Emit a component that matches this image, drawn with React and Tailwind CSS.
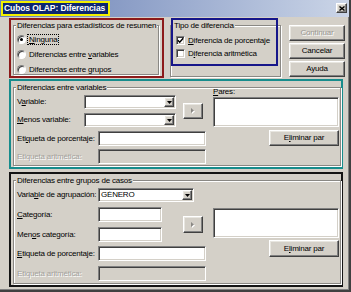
import React from "react";

const FIELD =
  "border border-t-[#808080] border-l-[#808080] border-b-white border-r-white shadow-[inset_1px_1px_0_#404040,inset_-1px_-1px_0_#d4d0c8]";
const RAISED =
  "border border-t-white border-l-white border-r-[#404040] border-b-[#404040] shadow-[inset_-1px_-1px_0_#808080,inset_1px_1px_0_#e8e6e0]";

function U({ children }) {
  return <span className="underline underline-offset-[1px]">{children}</span>;
}

function Radio({ checked }) {
  return (
    <span className="flex h-[9px] w-[9px] shrink-0 items-center justify-center rounded-full bg-white border border-t-[#808080] border-l-[#808080] border-b-white border-r-white shadow-[inset_1px_1px_0_#404040]">
      {checked && <span className="h-[3px] w-[3px] rounded-full bg-black" />}
    </span>
  );
}

function Check({ checked }) {
  return (
    <span className={"flex h-[9px] w-[9px] shrink-0 items-center justify-center bg-white " + FIELD}>
      {checked && (
        <svg width="7" height="7" viewBox="0 0 7 7">
          <path d="M0.8 3.3 L2.7 5.2 L6.2 1.3" stroke="#000" strokeWidth="1.5" fill="none" />
        </svg>
      )}
    </span>
  );
}

function Group({ legend, className, children }) {
  return (
    <div className={"relative border border-[#8a8884] shadow-[inset_1px_1px_0_#fff,1px_1px_0_#fff] " + className}>
      <span className="absolute left-[2px] top-[-5px] bg-[#d4d0c8] px-[1px] leading-[9px] whitespace-nowrap">
        {legend}
      </span>
      {children}
    </div>
  );
}

function Combo({ className, children }) {
  return (
    <div className={"flex items-center bg-white " + FIELD + " " + className}>
      <span className="flex-1 pl-[2px] leading-none truncate">{children}</span>
      <span className={"mr-[1px] flex h-[10px] w-[10px] items-center justify-center bg-[#d4d0c8] " + RAISED}>
        <svg width="5" height="3" viewBox="0 0 5 3">
          <path d="M0 0H5L2.5 3Z" fill="#000" />
        </svg>
      </span>
    </div>
  );
}

function Field({ className, disabled }) {
  return <div className={(disabled ? "bg-[#d4d0c8] " : "bg-white ") + FIELD + " " + className} />;
}

function ArrowBtn({ className }) {
  return (
    <div className={"flex h-[16px] w-[20px] items-center justify-center bg-[#d4d0c8] " + RAISED + " " + className}>
      <svg width="4" height="6" viewBox="0 0 4 6">
        <path d="M1 1L4 3.5L1 6Z" fill="#fff" />
        <path d="M0 0L3 2.5L0 5Z" fill="#8a8884" />
      </svg>
    </div>
  );
}

function Btn({ className, disabled, children }) {
  return (
    <div
      className={
        "flex items-center justify-center bg-[#d4d0c8] leading-none whitespace-nowrap " +
        RAISED +
        " " +
        (disabled ? "text-[#9a9893] [text-shadow:1px_1px_0_#fff] " : "") +
        className
      }
    >
      {children}
    </div>
  );
}

function Dis({ children }) {
  return <span className="text-[#a3a19c] [text-shadow:1px_1px_0_#fff]">{children}</span>;
}

export default function App() {
  return (
    <div className="relative flex h-[292px] w-[351px] flex-col overflow-hidden bg-[#d4d0c8] font-['Liberation_Sans',Arial,sans-serif] text-[8px] tracking-[-0.2px] text-black border-r-2 border-b-2 border-r-[#404040] border-b-[#404040] shadow-[inset_-1px_-1px_0_#808080]">
      {/* title bar */}
      <div className="flex h-[17px] shrink-0 items-start bg-linear-to-r from-[#6a80b4] to-[#cbd5e7]">
        <div className="ml-[1px] mt-[1px] flex h-[15px] w-[109px] items-center overflow-hidden whitespace-nowrap border-2 border-[#f2f000] bg-[#0c2670] pl-[1px] text-[8.5px] font-bold tracking-[-0.1px] text-white">
          Cubos OLAP: Diferencias
        </div>
        <div className={"ml-auto mr-[2px] mt-[3px] flex h-[10px] w-[11px] items-center justify-center bg-[#d4d0c8] " + RAISED}>
          <svg width="6" height="5" viewBox="0 0 6 5">
            <path d="M0.5 0.5L5.5 4.5M5.5 0.5L0.5 4.5" stroke="#000" strokeWidth="1.4" />
          </svg>
        </div>
      </div>

      <div className="flex flex-col pl-[9px]">
        {/* top row */}
        <div className="mt-[1px] flex items-start">
          <div className="h-[60px] w-[155px] border-2 border-[#8c1a1a] pl-[2px] pt-[5px]">
            <Group legend="Diferencias para estadísticos de resumen" className="h-[50px] w-[146px]">
              <div className="flex flex-col gap-[6px] pl-[3px] pt-[9px]">
                <div className="flex h-[9px] items-center">
                  <Radio checked />
                  <span className="ml-[2px] px-[1px] leading-[9px] outline outline-1 outline-dotted outline-black">
                    <U>N</U>inguna
                  </span>
                </div>
                <div className="flex h-[9px] items-center">
                  <Radio />
                  <span className="ml-[3px] leading-none">
                    Diferencias entre <U>v</U>ariables
                  </span>
                </div>
                <div className="flex h-[9px] items-center">
                  <Radio />
                  <span className="ml-[3px] leading-none">
                    Diferencias entre <U>g</U>rupos
                  </span>
                </div>
              </div>
            </Group>
          </div>

          <div className="relative ml-[6px] h-[60px] w-[111px]">
            <Group legend="Tipo de diferencia" className="mt-[7px] h-[52px] w-full">
              <div className="flex flex-col gap-[4px] pl-[5px] pt-[10px]">
                <div className="flex h-[9px] items-center">
                  <Check checked />
                  <span className="ml-[3px] leading-none">
                    <U>D</U>iferencia de porcentaje
                  </span>
                </div>
                <div className="flex h-[9px] items-center">
                  <Check />
                  <span className="ml-[3px] leading-none">
                    D<U>i</U>ferencia aritmética
                  </span>
                </div>
              </div>
            </Group>
            <div className="pointer-events-none absolute left-[1px] top-0 h-[48px] w-[107px] border-2 border-[#16168a]" />
          </div>

          <div className="ml-[8px] mt-[7px] flex w-[56px] flex-col gap-[2px]">
            <Btn disabled className="h-[16px]">Continuar</Btn>
            <Btn className="h-[16px]">Cancelar</Btn>
            <Btn className="h-[16px]">Ayuda</Btn>
          </div>
        </div>

        {/* teal: variables */}
        <div className="mt-[1px] h-[90px] w-[334px] border-2 border-[#178c8c] pl-[2px] pt-[6px]">
          <Group legend="Diferencias entre variables" className="h-[79px] w-[328px]">
            <div className="flex pl-[3px]">
              <div className="flex w-[189px] flex-col pt-[7px]">
                <div className="flex items-center">
                  <div className="flex w-[159px] flex-col gap-[4px]">
                    <div className="flex h-[14px] items-center">
                      <span className="w-[67px] leading-none">
                        V<U>a</U>riable:
                      </span>
                      <Combo className="h-[14px] w-[92px]" />
                    </div>
                    <div className="flex h-[14px] items-center">
                      <span className="w-[67px] leading-none">
                        <U>M</U>enos variable:
                      </span>
                      <Combo className="h-[14px] w-[92px]" />
                    </div>
                  </div>
                  <ArrowBtn className="ml-[7px]" />
                </div>
                <div className="mt-[4px] flex h-[15px] items-center">
                  <span className="w-[81px] leading-none">
                    Eti<U>q</U>ueta de porcentaje:
                  </span>
                  <Field className="h-[15px] w-[108px]" />
                </div>
                <div className="mt-[3px] flex h-[15px] items-center">
                  <span className="w-[81px] leading-none">
                    <Dis>Etiqueta aritmética:</Dis>
                  </span>
                  <Field disabled className="h-[15px] w-[108px]" />
                </div>
              </div>
              <div className="ml-[7px] flex w-[126px] flex-col">
                <span className="leading-[8px]">
                  <U>P</U>ares:
                </span>
                <Field className="mt-[1px] h-[30px] w-full" />
                <Btn className="mt-[3px] h-[16px] w-[70px] self-end">
                  E<U>l</U>iminar par
                </Btn>
              </div>
            </div>
          </Group>
        </div>

        {/* black: groups */}
        <div className="mt-[3px] h-[115px] w-[334px] border-2 border-[#141414] pl-[2px] pt-[6px]">
          <Group legend="Diferencias entre grupos de casos" className="h-[104px] w-[328px]">
            <div className="flex pl-[3px]">
              <div className="flex w-[189px] flex-col pt-[7px]">
                <div className="flex h-[14px] items-center">
                  <span className="w-[81px] leading-none">
                    Varia<U>b</U>le de agrupación:
                  </span>
                  <Combo className="h-[14px] w-[96px]">GÉNERO</Combo>
                </div>
                <div className="mt-[5px] flex items-center">
                  <div className="flex w-[145px] flex-col gap-[5px]">
                    <div className="flex h-[15px] items-center">
                      <span className="w-[81px] leading-none">
                        <U>C</U>ategoría:
                      </span>
                      <Field className="h-[15px] w-[64px]" />
                    </div>
                    <div className="flex h-[15px] items-center">
                      <span className="w-[81px] leading-none">
                        Men<U>o</U>s categoría:
                      </span>
                      <Field className="h-[15px] w-[64px]" />
                    </div>
                  </div>
                  <ArrowBtn className="ml-[21px] h-[17px]" />
                </div>
                <div className="mt-[4px] flex h-[15px] items-center">
                  <span className="w-[81px] leading-none">
                    <U>E</U>tiqueta de porcentaje:
                  </span>
                  <Field className="h-[15px] w-[108px]" />
                </div>
                <div className="mt-[5px] flex h-[15px] items-center">
                  <span className="w-[81px] leading-none">
                    <Dis>Etiqueta aritmética:</Dis>
                  </span>
                  <Field disabled className="h-[15px] w-[108px]" />
                </div>
              </div>
              <div className="ml-[7px] flex w-[126px] flex-col pt-[27px]">
                <Field className="h-[30px] w-full" />
                <Btn className="mt-[2px] h-[17px] w-[70px] self-end">
                  E<U>l</U>iminar par
                </Btn>
              </div>
            </div>
          </Group>
        </div>
      </div>
    </div>
  );
}
